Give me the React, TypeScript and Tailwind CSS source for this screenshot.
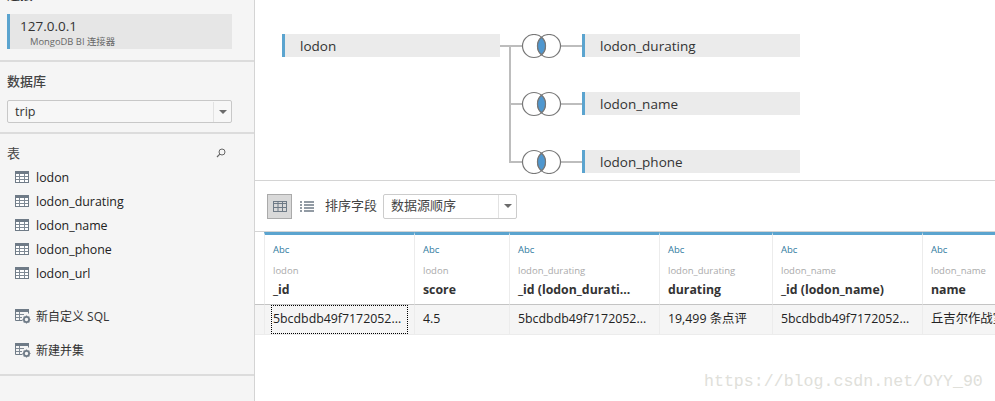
const FONT = "[font-family:'Open_Sans','Noto_Sans_CJK_SC',sans-serif]";

const TableIcon = () => (
  <svg width="14" height="12" viewBox="0 0 14 12" className="shrink-0">
    <rect x="0.5" y="0.5" width="13" height="11" fill="#fff" stroke="#6f7b87" />
    <rect x="0" y="0" width="14" height="3" fill="#6f7b87" />
    <path d="M4.5 3v8M9.5 3v8M1 5.5h12M1 8.5h12" stroke="#7f8a95" strokeWidth="1" />
  </svg>
);

const CustomIcon = () => (
  <svg width="16" height="15" viewBox="0 0 16 15" className="shrink-0">
    <path d="M0.5 0.5h13v4M0.5 0.5v11h7" fill="none" stroke="#6f7b87" />
    <rect x="0" y="0" width="14" height="3" fill="#6f7b87" />
    <path d="M4.5 3v8M1 5.5h8M1 8.5h6" stroke="#7f8a95" />
    <circle cx="11.5" cy="10.5" r="2.6" fill="none" stroke="#6f7b87" strokeWidth="1.8" />
    <path d="M11.5 6.5v1.4M11.5 13.1v1.4M7.5 10.5h1.4M14.1 10.5h1.4M8.7 7.7l1 1M13.3 12.3l1 1M14.3 7.7l-1 1M9.7 12.3l-1 1" stroke="#6f7b87" strokeWidth="1.2" />
  </svg>
);

const Caret = () => <div className="h-0 w-0 border-x-[4px] border-t-[4px] border-x-transparent border-t-[#6b6b6b]" />;

// two overlapping circles, the overlap is the inner join
const JoinIcon = ({ y }: { y: number }) => (
  <g transform={`translate(0 ${y})`}>
    <circle cx="34" cy="0" r="11.5" fill="#fff" stroke="#777" strokeWidth="1.2" />
    <circle cx="49" cy="0" r="11.5" fill="#fff" fillOpacity="0" stroke="#777" strokeWidth="1.2" />
    <path d="M41.5 -8.7A11.5 11.5 0 0 1 41.5 8.7A11.5 11.5 0 0 1 41.5 -8.7Z" fill="#4f97cf" stroke="#777" strokeWidth="1.2" />
  </g>
);

const RightNode = ({ name }: { name: string }) => (
  <div className="flex h-[23px] w-[218px] items-center border-l-[3px] border-[#5ba4cf] bg-[#ebebeb] pl-[15px] pt-[2px] text-[13.5px] text-[#333]">{name}</div>
);

const columns = [
  { w: "w-[150px]", source: "lodon", name: "_id", value: "5bcdbdb49f7172052...", focus: true },
  { w: "w-[95px]", source: "lodon", name: "score", value: "4.5" },
  { w: "w-[150px]", source: "lodon_durating", name: "_id (lodon_durati...", value: "5bcdbdb49f7172052..." },
  { w: "w-[113px]", source: "lodon_durating", name: "durating", value: "19,499 条点评" },
  { w: "w-[150px]", source: "lodon_name", name: "_id (lodon_name)", value: "5bcdbdb49f7172052..." },
  { w: "w-[80px]", source: "lodon_name", name: "name", value: "丘吉尔作战室" },
];

export default function App() {
  return (
    <div className={`${FONT} relative flex h-[401px] w-[995px] overflow-hidden bg-white text-[#333]`}>
      {/* Left panel */}
      <aside className="flex h-full w-[255px] shrink-0 flex-col border-r border-[#d4d4d4] bg-[#f5f5f5]">
        <div className="h-[62px] border-b-2 border-[#dcdcdc] px-[7px]">
          <div className="-mt-[13px] flex h-[14px] items-start justify-between pr-[15px] text-[13px] leading-[14px]">
            <span className="font-semibold">连接</span>
            <span className="text-[12px] text-[#5ba4cf]">添加</span>
          </div>
          <div className="mt-[13px] h-[35px] w-[225px] border-l-[3px] border-[#5ba4cf] bg-[#e6e6e6] pl-[10px] pt-[3px]">
            <div className="text-[13.5px] leading-[18px] text-[#333]">127.0.0.1</div>
            <div className="pl-[10px] text-[9.4px] leading-[13px] text-[#666]">MongoDB BI 连接器</div>
          </div>
        </div>
        <div className="h-[72px] border-b-2 border-[#dcdcdc] px-[7px]">
          <div className="mt-[10px] text-[13px] font-medium leading-[18px] text-[#444]">数据库</div>
          <div className="mt-[10px] flex h-[23px] w-[225px] items-center rounded-[2px] border border-[#c8c8c8] bg-[#f7f7f7] pt-[1px] text-[12.6px]">
            <span className="flex-1 pl-[7px]">trip</span>
            <div className="flex h-full w-[18px] items-center justify-center border-l border-[#e2e2e2]">
              <Caret />
            </div>
          </div>
        </div>
        <div className="flex items-center justify-between pl-[7px] pr-[28px] pt-[10px]">
          <span className="text-[13px] leading-[18px] text-[#444]">表</span>
          <svg width="10" height="10" viewBox="0 0 10 10">
            <circle cx="6" cy="4" r="3" fill="none" stroke="#666" />
            <path d="M3.8 6.2L1 9" stroke="#666" strokeWidth="1.2" />
          </svg>
        </div>
        <div className="mt-[3px] flex flex-col">
          {["lodon", "lodon_durating", "lodon_name", "lodon_phone", "lodon_url"].map((t) => (
            <div key={t} className="flex h-[24px] items-center gap-[7px] pl-[15px] text-[12.4px] text-[#222]">
              <TableIcon />
              <span className="pt-[2px]">{t}</span>
            </div>
          ))}
        </div>
        <div className="mt-[19px] flex h-[24px] items-center gap-[5px] pl-[15px] text-[12px] text-[#333]">
          <CustomIcon />
          <span className="pt-[2px]">新自定义 SQL</span>
        </div>
        <div className="mt-[10px] flex h-[24px] items-center gap-[5px] pl-[15px] text-[12px] text-[#333]">
          <CustomIcon />
          <span className="pt-[2px]">新建并集</span>
        </div>
        <div className="mt-[12px] border-t-2 border-[#dcdcdc]" />
      </aside>

      {/* Main */}
      <main className="flex min-w-0 flex-1 flex-col">
        {/* Join canvas */}
        <div className="flex h-[181px] items-start border-b border-[#d4d4d4] pl-[27px] pt-[34px]">
          <div className="flex h-[23px] w-[218px] items-center border-l-[3px] border-[#5ba4cf] bg-[#ebebeb] pl-[15px] pt-[2px] text-[13.5px] text-[#333]">
            lodon
          </div>
          <svg width="82" height="140" viewBox="0 0 82 140" className="shrink-0">
            <path d="M0 12H23M10 12V128H23M10 70H23M60 12H82M60 70H82M60 128H82" fill="none" stroke="#bdbdbd" strokeWidth="2" />
            <JoinIcon y={12} />
            <JoinIcon y={70} />
            <JoinIcon y={128} />
          </svg>
          <div className="flex flex-col gap-[35px]">
            <RightNode name="lodon_durating" />
            <RightNode name="lodon_name" />
            <RightNode name="lodon_phone" />
          </div>
        </div>

        {/* Toolbar */}
        <div className="flex h-[50px] items-center pl-[12px]">
          <div className="flex h-[25px] w-[25px] items-center justify-center border border-[#aaa] bg-[#d9d9d9]">
            <svg width="14" height="11" viewBox="0 0 14 11">
              <rect x="0.5" y="0.5" width="13" height="10" fill="none" stroke="#6f7b87" />
              <path d="M0 2.5h14M5 0v11M9.5 0v11M0 6.5h14" stroke="#6f7b87" />
            </svg>
          </div>
          <svg width="14" height="11" viewBox="0 0 14 11" className="ml-[8px]">
            <path d="M0 1h2M4 1h10M0 4h2M4 4h10M0 7h2M4 7h10M0 10h2M4 10h10" stroke="#6f7b87" strokeWidth="1.5" />
          </svg>
          <span className="ml-[11px] text-[13px] text-[#444]">排序字段</span>
          <div className="ml-[6px] flex h-[25px] w-[134px] items-center rounded-[2px] border border-[#ccc] text-[13px] text-[#444]">
            <span className="flex-1 pl-[7px]">数据源顺序</span>
            <div className="flex h-full w-[18px] items-center justify-center border-l border-[#e2e2e2]">
              <Caret />
            </div>
          </div>
        </div>

        {/* Data grid */}
        <div className="flex border-t border-[#d4d4d4]">
          <div className="w-[9px] shrink-0">
            <div className="h-[73px] border-b border-[#c4c4c4]" />
            <div className="h-[30px] border-b border-[#ececec] bg-[#f5f5f5]" />
          </div>
          {columns.map((c) => (
            <div key={c.w + c.name} className={`${c.w} shrink-0`}>
              <div className="h-[73px] overflow-hidden whitespace-nowrap border-b border-l border-t-[3px] border-b-[#c4c4c4] border-l-[#ececec] border-t-[#5ba4cf] pl-[8px]">
                <div className="pt-[8px] text-[9.5px] font-medium leading-[13px] text-[#2f7a9e]">Abc</div>
                <div className="mt-[8px] text-[9.5px] leading-[13px] text-[#aaa]">{c.source}</div>
                <div className="mt-[3px] text-[12.3px] font-bold leading-[20px] text-[#333]">{c.name}</div>
              </div>
              <div className="relative flex h-[30px] items-center overflow-hidden whitespace-nowrap border-b border-l border-[#ececec] bg-[#f5f5f5] pl-[8px] text-[12.35px] text-[#222]">
                {c.value}
                {c.focus && <div className="absolute inset-x-[6px] inset-y-0 border border-dotted border-black" />}
              </div>
            </div>
          ))}
        </div>
      </main>

      {/* csdn watermark */}
      <div className="absolute left-[704px] top-[372px] whitespace-nowrap text-[16.6px] leading-[20px] text-[#e0e0da] [font-family:'Liberation_Mono',monospace]">
        https://blog.csdn.net/OYY_90
      </div>
    </div>
  );
}
